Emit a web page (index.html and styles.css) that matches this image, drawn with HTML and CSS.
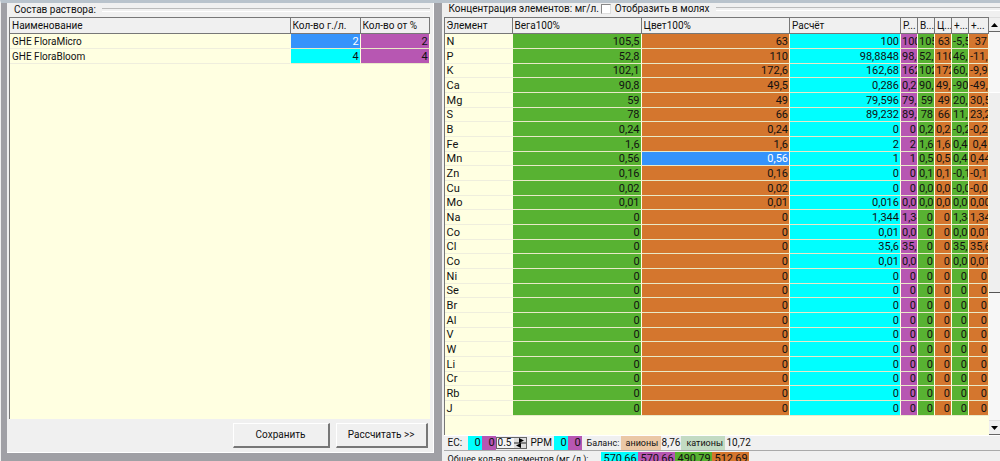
FILE: index.html
```html
<!DOCTYPE html>
<html lang="ru">
<head>
<meta charset="utf-8">
<title>Состав раствора</title>
<link rel="stylesheet" href="styles.css">
</head>
<body>
<main class="app">
  <section class="pane pane-left">
    <h2 class="caption">Состав раствора:</h2>
    <div class="list">
      <table class="grid">
        <colgroup><col><col class="w-amount"><col class="w-percent"></colgroup>
        <thead><tr><th>Наименование</th><th>Кол-во г./л.</th><th>Кол-во от %</th></tr></thead>
        <tbody>
          <tr><td>GHE FloraMicro</td><td class="num selected">2</td><td class="num purple">2</td></tr>
          <tr><td>GHE FloraBloom</td><td class="num cyan">4</td><td class="num purple">4</td></tr>
        </tbody>
      </table>
    </div>
    <div class="actions">
      <button type="button" class="btn">Сохранить</button>
      <button type="button" class="btn">Рассчитать &gt;&gt;</button>
    </div>
  </section>

  <section class="pane pane-right">
    <div class="caption">
      <h2 class="caption-text">Концентрация элементов: мг/л.</h2>
      <input type="checkbox" id="moles" class="check">
      <label for="moles" class="check-label">Отобразить в молях</label>
    </div>
    <div class="scroller">
      <div class="list">
        <table class="grid elements">
          <colgroup><col class="w-name"><col class="w-vega"><col><col class="w-calc"><col class="w-mini"><col class="w-mini"><col class="w-mini"><col class="w-mini"><col class="w-last"></colgroup>
          <thead><tr><th>Элемент</th><th>Вега100%</th><th>Цвет100%</th><th>Расчёт</th><th>Р...</th><th>В...</th><th>Ц...</th><th>+...</th><th>+...</th></tr></thead>
          <tbody id="rows"></tbody>
        </table>
      </div>
      <div class="scrollbar">
        <button type="button" class="arrow" aria-label="Вверх"><svg width="7" height="4" viewBox="0 0 7 4"><path d="M0 4L3.500 0L7 4Z"/></svg></button>
        <div class="track"><div class="thumb"></div></div>
        <button type="button" class="arrow" aria-label="Вниз"><svg width="7" height="4" viewBox="0 0 7 4"><path d="M0 0L3.500 4L7 0Z"/></svg></button>
      </div>
    </div>
    <div class="status">
      <label for="ec" class="ec-label">ЕС:</label>
      <span class="val small cyan">0</span><span class="val small purple">0</span>
      <span class="spin">
        <input type="text" id="ec" class="spin-input" value="0.5">
        <button type="button" class="spin-btn" aria-label="Изменить"><svg width="12" height="10" viewBox="0 0 12 10"><path d="M0 5H12M6 1V9" stroke="#222" fill="none"/><path d="M5 0L10 2.500L5 5ZM7 5L2 7.500L7 10Z"/></svg></button>
      </span>
      <span class="ppm-label">PPM</span>
      <span class="val small cyan">0</span><span class="val small purple">0</span>
      <span class="balance-label">Баланс:</span>
      <span class="ion anion">анионы</span><span class="ion-value">8,76</span>
      <span class="ion cation">катионы</span><span class="ion-value">10,72</span>
    </div>
    <div class="status totals">
      <span class="total-label">Общее кол-во элементов (мг./л.):</span>
      <span class="val total cyan">570,66</span><span class="val total purple">570,66</span><span class="val total green">490,79</span><span class="val total orange">512,69</span>
    </div>
  </section>
</main>
<script src="table.js"></script>
</body>
</html>
```
FILE: styles.css
```css
* { box-sizing: border-box; }

body {
  margin: 0;
  font-family: Roboto, "Liberation Sans", sans-serif;
  font-size: 10px;
  line-height: 14px;
  color: #111;
  background: #a0a0a5;
}

.app {
  display: flex;
  height: 100vh;
  overflow: hidden;
  border-top: 3px solid #b9c3cc;
  border-left: 1px solid #f0f0f0;
}

.pane {
  display: flex;
  flex-direction: column;
  background: #f0f0f0;
}

.pane-left {
  flex: 424 1 0;
  min-width: 0;
  margin: 0 8px 8px 6px;
  padding: 0 3px 4px 2px;
  border-right: 1px solid #fff;
  border-bottom: 1px solid #fff;
}

.pane-right {
  flex: 561 1 0;
  min-width: 0;
  padding-left: 2px;
}

.caption {
  display: flex;
  flex: none;
  align-items: center;
  height: 14px;
  margin: 0;
  padding-left: 5px;
  font-size: 10px;
  font-weight: normal;
}

.pane-right .caption { padding-bottom: 3px; }

.caption::after {
  content: "";
  flex: 1;
  height: 2px;
  margin-left: 6px;
  border-top: 1px solid #bbb;
  border-bottom: 1px solid #fff;
}

.caption-text { margin: 0; font-size: 10px; font-weight: normal; }

.check {
  appearance: none;
  width: 10px;
  height: 10px;
  margin: 0 4px 0 2px;
  border: 1px solid #888;
  border-right-color: #ddd;
  border-bottom-color: #ddd;
  background: #fff;
}

.list {
  flex: 1;
  min-width: 0;
  overflow: hidden;
  background: #ffffe1;
  border-top: 1px solid #777;
  border-left: 1px solid #777;
}

.grid {
  width: 100%;
  table-layout: fixed;
  border-collapse: separate;
  border-spacing: 0;
}

.w-amount { width: 70px; }
.w-percent { width: 69px; }
.w-name { width: 68px; }
.w-vega { width: 129px; }
.w-calc { width: 111px; }
.w-mini { width: 17px; }
.w-last { width: 20px; }

th, td {
  padding: 0 1px 0 2px;
  font-weight: normal;
  text-align: left;
  white-space: nowrap;
  overflow: hidden;
}

th {
  height: 16px;
  background: #f0f0f0;
  border-right: 1px solid #777;
  border-bottom: 1px solid #777;
}

td {
  height: 15px;
  line-height: 13px;
  border-bottom: 1px solid #efeedd;
  border-right: 1px solid #ffffe1;
}

.elements td { font-size: 11px; }
.elements tr:nth-child(3n) td { height: 14px; }
.elements { margin-bottom: 19px; }

.num { padding-left: 1px; font-size: 11px; text-align: right; border-bottom-color: #e9e9c8; }
.cyan { background: #00ffff; }
.purple { background: #b757b2; }
.green { background: #58b232; }
.orange { background: #d4762e; }
.selected { background: #3593fb; color: #fff; }

.actions {
  display: flex;
  flex: none;
  justify-content: flex-end;
  gap: 6px;
  padding: 4px 2px 0 0;
}

.btn {
  width: 97px;
  height: 25px;
  padding: 0;
  font: inherit;
  color: inherit;
  background: #f0f0f0;
  border: 1px solid #fff;
  border-right: 2px solid #777;
  border-bottom: 2px solid #777;
}

.btn + .btn { width: 92px; }

.scroller { display: flex; flex: none; }

.scrollbar {
  display: flex;
  flex-direction: column;
  flex: none;
  width: 11px;
}

.arrow {
  display: flex;
  align-items: center;
  justify-content: center;
  flex: none;
  height: 15px;
  padding: 0;
  background: #f0f0f0;
  border: 0;
  border-top: 1px solid #ddd;
  border-bottom: 1px solid #666;
}

.track { flex: 1; padding-top: 60px; background: #f7f7f7; }

.thumb {
  height: 201px;
  background: #efefef;
  border-top: 1px solid #fff;
  border-bottom: 1px solid #555;
}

.status {
  display: flex;
  flex: none;
  align-items: center;
  height: 16px;
  padding-left: 4px;
  border-top: 1px solid #fff;
  border-bottom: 1px solid #aaa;
  white-space: nowrap;
}

.totals { border: 0; }

.val { flex: none; font-size: 11px; text-align: right; }
.small { width: 14px; padding-right: 1px; }
.total { width: 37px; padding-right: 1px; }
.ec-label { width: 20px; }
.ppm-label { width: 27px; padding-left: 4px; }
.balance-label { width: 39px; padding-left: 5px; font-size: 9px; }
.total-label { flex: none; width: 153px; font-size: 9px; }

.spin {
  display: flex;
  width: 31px;
  height: 12px;
  border: 1px solid #666;
}

.spin-input {
  width: 17px;
  padding: 0 0 0 1px;
  font: inherit;
  color: inherit;
  background: #f4f4f4;
  border: 0;
}

.spin-btn {
  display: flex;
  width: 12px;
  padding: 0;
  background: #ddd;
  border: 0;
}

.ion { padding: 0 1px 0 5px; font-size: 9px; }
.anion { width: 40px; background: #ebc8a6; }
.cation { width: 44px; background: #c3dbc3; }
.ion-value { padding: 0 1px; }
```
FILE: table.js
```js
const elements = [
  ["N", "105,5", "63", "100", "-5,5", "37"],
  ["P", "52,8", "110", "98,8848", "46,0848", "-11,1152"],
  ["K", "102,1", "172,6", "162,68", "60,58", "-9,92"],
  ["Ca", "90,8", "49,5", "0,286", "-90,514", "-49,214"],
  ["Mg", "59", "49", "79,596", "20,596", "30,596"],
  ["S", "78", "66", "89,232", "11,232", "23,232"],
  ["B", "0,24", "0,24", "0", "-0,24", "-0,24"],
  ["Fe", "1,6", "1,6", "2", "0,4", "0,4"],
  ["Mn", "0,56", "0,56", "1", "0,44", "0,44"],
  ["Zn", "0,16", "0,16", "0", "-0,16", "-0,16"],
  ["Cu", "0,02", "0,02", "0", "-0,02", "-0,02"],
  ["Mo", "0,01", "0,01", "0,016", "0,006", "0,006"],
  ["Na", "0", "0", "1,344", "1,344", "1,344"],
  ["Co", "0", "0", "0,01", "0,01", "0,01"],
  ["Cl", "0", "0", "35,6", "35,6", "35,6"],
  ["Co", "0", "0", "0,01", "0,01", "0,01"],
  ...["Ni", "Se", "Br", "Al", "V", "W", "Li", "Cr", "Rb", "J"].map(n => [n, "0", "0", "0", "0", "0"])
];
const colors = ["", "green", "orange", "cyan", "purple", "green", "orange", "green", "orange"];

const body = document.getElementById("rows");
for (const [name, vega, bloom, calc, dVega, dBloom] of elements) {
  const row = body.insertRow();
  [name, vega, bloom, calc, calc, vega, bloom, dVega, dBloom].forEach((text, i) => {
    const cell = row.insertCell();
    cell.textContent = text;
    if (i > 0) {
      const zero = text === "0" || i < 4;
      cell.className = "num " + (name === "Mn" && i === 2 ? "selected" : colors[i]);
    }
  });
}
```
